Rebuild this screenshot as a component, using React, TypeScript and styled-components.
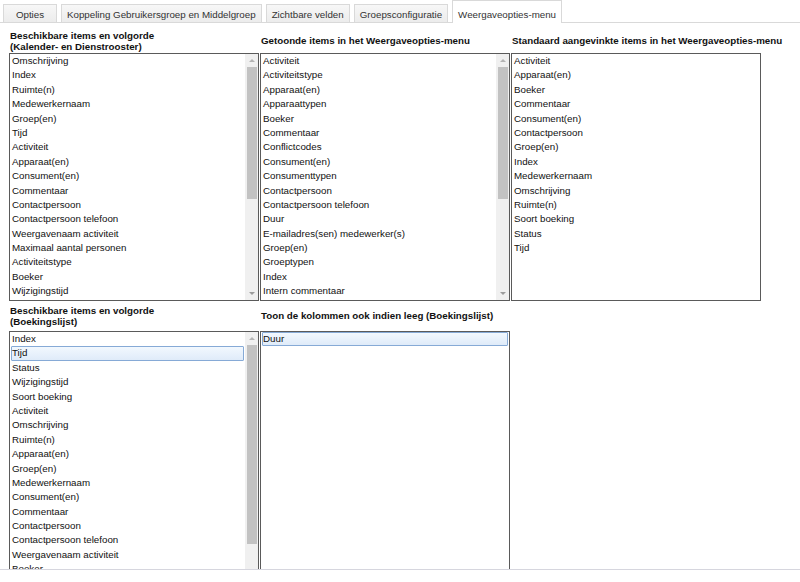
import React from "react";
import styled, { createGlobalStyle } from "styled-components";

const GlobalStyle = createGlobalStyle`
  html, body {
    margin: 0;
    padding: 0;
    background: #fff;
  }
  body {
    font-family: "Liberation Sans", Arial, sans-serif;
    font-size: 9.75px;
    color: #000;
  }
`;

const Page = styled.div`
  width: 800px;
  height: 582px;
  overflow: hidden;
  background: #fff;
`;

const TabBar = styled.div`
  display: flex;
  align-items: flex-end;
  gap: 4px;
  height: 22px;
  padding-left: 3px;
  border-bottom: 1px solid #d9d9d9;
`;

const Tab = styled.div<{ $active?: boolean }>`
  box-sizing: border-box;
  display: flex;
  align-items: flex-end;
  justify-content: center;
  min-width: 54px;
  padding: 0 5px ${(p) => (p.$active ? "3px" : "2px")};
  height: ${(p) => (p.$active ? "23px" : "18px")};
  margin-bottom: ${(p) => (p.$active ? "-1px" : "0")};
  line-height: 11px;
  color: #333;
  white-space: nowrap;
  border: 1px solid #d9d9d9;
  border-bottom: none;
  background: ${(p) =>
    p.$active ? "#fff" : "linear-gradient(#f7f7f7, #ececec)"};
`;

const Panel = styled.div`
  box-sizing: border-box;
  height: 547px;
  padding: 6px 0 0 9px;
  border-bottom: 1px solid #d6d6de;
  overflow: hidden;
  display: grid;
  grid-template-columns: repeat(3, 250px);
  grid-template-rows: 24px 248px 30px 262px;
  column-gap: 1px;
`;

const Title = styled.div`
  display: flex;
  flex-direction: column;
  justify-content: center;
  padding-left: 1px;
  font-weight: bold;
  white-space: nowrap;
  color: #111;
`;

const TitleLine = styled.span`
  display: block;
  line-height: 11.5px;
`;

const ListBox = styled.div`
  box-sizing: border-box;
  display: flex;
  height: 100%;
  border: 1px solid #5a5a5a;
  background: #fff;
  overflow: hidden;
`;

const ItemList = styled.div`
  flex: 1;
  min-width: 0;
  overflow: hidden;
  white-space: nowrap;
`;

const Item = styled.div<{ $selected?: boolean }>`
  box-sizing: border-box;
  height: 14.4px;
  margin: 0 1px;
  line-height: 12.4px;
  border: 1px solid ${(p) => (p.$selected ? "#86aad6" : "transparent")};
  border-radius: 1px;
  background: ${(p) =>
    p.$selected ? "linear-gradient(#f2f8fe, #dfebf9)" : "transparent"};
  color: #111;
`;

const ScrollBar = styled.div`
  width: 13px;
  flex: none;
  display: flex;
  flex-direction: column;
  background: #f0f0f0;
`;

const Arrow = styled.div<{ $down?: boolean }>`
  height: 13px;
  flex: none;
  display: flex;
  align-items: center;
  justify-content: center;

  &::after {
    content: "";
    border-left: 3px solid transparent;
    border-right: 3px solid transparent;
    ${(p) =>
      p.$down
        ? "border-top: 3px solid #9c9c9c;"
        : "border-bottom: 3px solid #b4b4b4;"}
  }
`;

const Track = styled.div`
  flex: 1;
  display: flex;
  flex-direction: column;
  padding: 0 1px 0 2px;
`;

const Thumb = styled.div<{ $size: number }>`
  height: ${(p) => p.$size}%;
  background: #c2c2c2;
`;

interface ListProps {
  items: string[];
  selected?: string;
  thumb?: number;
}

const List: React.FC<ListProps> = ({ items, selected, thumb }) => (
  <ListBox>
    <ItemList>
      {items.map((item) => (
        <Item key={item} $selected={item === selected}>
          {item}
        </Item>
      ))}
    </ItemList>
    {thumb !== undefined && (
      <ScrollBar>
        <Arrow />
        <Track>
          <Thumb $size={thumb} />
        </Track>
        <Arrow $down />
      </ScrollBar>
    )}
  </ListBox>
);

// only the rows that are visible in the boxes; the rest is scrolled away
const calendarItems = [
  "Omschrijving",
  "Index",
  "Ruimte(n)",
  "Medewerkernaam",
  "Groep(en)",
  "Tijd",
  "Activiteit",
  "Apparaat(en)",
  "Consument(en)",
  "Commentaar",
  "Contactpersoon",
  "Contactpersoon telefoon",
  "Weergavenaam activiteit",
  "Maximaal aantal personen",
  "Activiteitstype",
  "Boeker",
  "Wijzigingstijd",
];

const menuItems = [
  "Activiteit",
  "Activiteitstype",
  "Apparaat(en)",
  "Apparaattypen",
  "Boeker",
  "Commentaar",
  "Conflictcodes",
  "Consument(en)",
  "Consumenttypen",
  "Contactpersoon",
  "Contactpersoon telefoon",
  "Duur",
  "E-mailadres(sen) medewerker(s)",
  "Groep(en)",
  "Groeptypen",
  "Index",
  "Intern commentaar",
];

const checkedItems = [
  "Activiteit",
  "Apparaat(en)",
  "Boeker",
  "Commentaar",
  "Consument(en)",
  "Contactpersoon",
  "Groep(en)",
  "Index",
  "Medewerkernaam",
  "Omschrijving",
  "Ruimte(n)",
  "Soort boeking",
  "Status",
  "Tijd",
];

const bookingItems = [
  "Index",
  "Tijd",
  "Status",
  "Wijzigingstijd",
  "Soort boeking",
  "Activiteit",
  "Omschrijving",
  "Ruimte(n)",
  "Apparaat(en)",
  "Groep(en)",
  "Medewerkernaam",
  "Consument(en)",
  "Commentaar",
  "Contactpersoon",
  "Contactpersoon telefoon",
  "Weergavenaam activiteit",
  "Boeker",
];

const tabs = [
  "Opties",
  "Koppeling Gebruikersgroep en Middelgroep",
  "Zichtbare velden",
  "Groepsconfiguratie",
  "Weergaveopties-menu",
];

const App: React.FC = () => {
  return (
    <Page>
      <GlobalStyle />
      <TabBar>
        {tabs.map((tab) => (
          <Tab key={tab} $active={tab === "Weergaveopties-menu"}>
            {tab}
          </Tab>
        ))}
      </TabBar>
      <Panel>
        <Title>
          <TitleLine>Beschikbare items en volgorde</TitleLine>
          <TitleLine>(Kalender- en Dienstrooster)</TitleLine>
        </Title>
        <Title>
          <TitleLine>Getoonde items in het Weergaveopties-menu</TitleLine>
        </Title>
        <Title>
          <TitleLine>
            Standaard aangevinkte items in het Weergaveopties-menu
          </TitleLine>
        </Title>

        <List items={calendarItems} thumb={60} />
        <List items={menuItems} thumb={60} />
        <List items={checkedItems} />

        <Title>
          <TitleLine>Beschikbare items en volgorde</TitleLine>
          <TitleLine>(Boekingslijst)</TitleLine>
        </Title>
        <Title>
          <TitleLine>Toon de kolommen ook indien leeg (Boekingslijst)</TitleLine>
        </Title>
        <div />

        <List items={bookingItems} selected="Tijd" thumb={85} />
        <List items={["Duur"]} selected="Duur" />
      </Panel>
    </Page>
  );
};

export default App;
